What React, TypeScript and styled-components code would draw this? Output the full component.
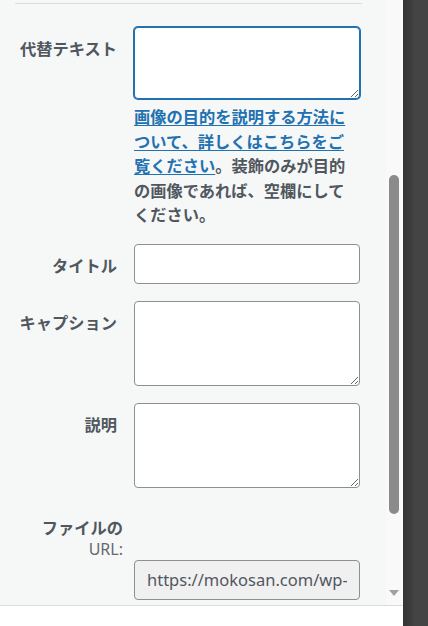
import styled, { createGlobalStyle } from 'styled-components';

const GlobalStyle = createGlobalStyle`
  html, body {
    margin: 0;
    padding: 0;
    background: #ffffff;
  }
  body {
    font-family: "Noto Sans CJK JP", "Noto Sans", sans-serif;
  }
`;

export default function App() {
  return (
    <>
      <GlobalStyle />
      <Screen>
        <Panel>
          <ScrollArea>
            <Content>
              <Rule />
              <Fields>
                <Row>
                  <Label>代替テキスト</Label>
                  <Stack>
                    <TextArea $focused rows={3} />
                    <Help>
                      <HelpLink href='#'>画像の目的を説明する方法について、詳しくはこちらをご覧ください</HelpLink>
                      。装飾のみが目的の画像であれば、空欄にしてください。
                    </Help>
                  </Stack>
                </Row>

                <Row>
                  <Label>タイトル</Label>
                  <TextInput type='text' />
                </Row>

                <Row>
                  <Label>キャプション</Label>
                  <TextArea />
                </Row>

                <Row>
                  <Label>説明</Label>
                  <TextArea />
                </Row>

                <Row>
                  <UrlLabel>
                    ファイルの
                    <Sub>URL:</Sub>
                  </UrlLabel>
                  <Spacer />
                  <Spacer />
                  <TextInput
                    type='text'
                    readOnly
                    $readOnly
                    value='https://mokosan.com/wp-content/uploads/2023/01/image.png'
                  />
                </Row>
              </Fields>
            </Content>

            <Scrollbar>
              <Thumb />
              <ArrowDown />
            </Scrollbar>
          </ScrollArea>
          <Footer />
        </Panel>
        <Edge />
      </Screen>
    </>
  );
}

const Screen = styled('div')`
  display: flex;
  width: 428px;
  height: 626px;
  overflow: hidden;
`;

const Panel = styled('div')`
  flex: 1;
  display: flex;
  flex-direction: column;
  min-width: 0;
`;

const ScrollArea = styled('div')`
  flex: 1;
  display: flex;
  background: #f6f7f7;
  overflow: hidden;
`;

const Content = styled('div')`
  flex: 1;
  padding: 3px 0 0 15px;
  min-width: 0;
`;

const Rule = styled('div')`
  width: 347px;
  border-top: 1px solid #dcdcde;
`;

const Fields = styled('div')`
  display: flex;
  flex-direction: column;
  gap: 17px;
  padding-top: 23px;
`;

const Row = styled('div')`
  display: grid;
  grid-template-columns: 102px 226px;
  column-gap: 17px;
  align-items: start;
`;

const Label = styled('label')`
  display: flex;
  flex-direction: column;
  align-items: flex-end;
  padding-top: 9px;
  font-size: 16.25px;
  line-height: 24px;
  font-weight: 700;
  color: #50575e;
  text-align: right;
  white-space: nowrap;
`;

const UrlLabel = styled(Label)`
  margin-right: -6px;
  padding-top: 10px;
`;

const Sub = styled('span')`
  font-family: "Noto Sans", "Open Sans", sans-serif;
  font-weight: 400;
  font-size: 16px;
  line-height: 21px;
  color: #646970;
`;

const Spacer = styled('div')``;

const Stack = styled('div')`
  display: flex;
  flex-direction: column;
  gap: 5px;
`;

const TextArea = styled('textarea')<{ $focused?: boolean }>`
  display: block;
  box-sizing: border-box;
  width: 226px;
  height: ${(p) => (p.$focused ? '72px' : '85px')};
  margin: 0;
  padding: 6px 10px;
  background: #ffffff;
  border: 1px solid ${(p) => (p.$focused ? '#2271b1' : '#8c8f94')};
  box-shadow: ${(p) => (p.$focused ? '0 0 0 1px #2271b1' : 'none')};
  border-radius: 4px;
  resize: vertical;
  font-family: inherit;
  font-size: 16px;
  outline: none;
`;

const TextInput = styled('input')<{ $readOnly?: boolean }>`
  display: block;
  box-sizing: border-box;
  width: 226px;
  height: 40px;
  margin: 0;
  padding: 0 12px;
  background: ${(p) => (p.$readOnly ? '#f0f0f1' : '#ffffff')};
  border: 1px solid #8c8f94;
  border-radius: 4px;
  font-family: "Noto Sans", "Open Sans", sans-serif;
  font-size: 16.5px;
  color: #50575e;
  outline: none;
`;

const Help = styled('p')`
  margin: 0;
  font-size: 16.25px;
  line-height: 24.5px;
  font-weight: 700;
  color: #50575e;
`;

const HelpLink = styled('a')`
  color: #2271b1;
  text-decoration: underline;
  text-underline-offset: 2px;
`;

const Scrollbar = styled('div')`
  width: 17px;
  display: flex;
  flex-direction: column;
  align-items: center;
  background: #f9f9f9;
  padding-top: 175px;
`;

const Thumb = styled('div')`
  width: 10px;
  height: 339px;
  border-radius: 5px;
  background: #8b8b8b;
  margin-left: -1px;
`;

const ArrowDown = styled('div')`
  margin-top: 76px;
  margin-left: -1px;
  width: 0;
  height: 0;
  border-left: 5px solid transparent;
  border-right: 5px solid transparent;
  border-top: 6px solid #a0a0a0;
`;

const Footer = styled('div')`
  height: 20px;
  background: #ffffff;
  border-top: 1px solid #dcdcde;
`;

const Edge = styled('div')`
  width: 25px;
  background: linear-gradient(to right, #353535 0px, #3a3a3a 6px, #444444 12px, #444444 100%);
`;
